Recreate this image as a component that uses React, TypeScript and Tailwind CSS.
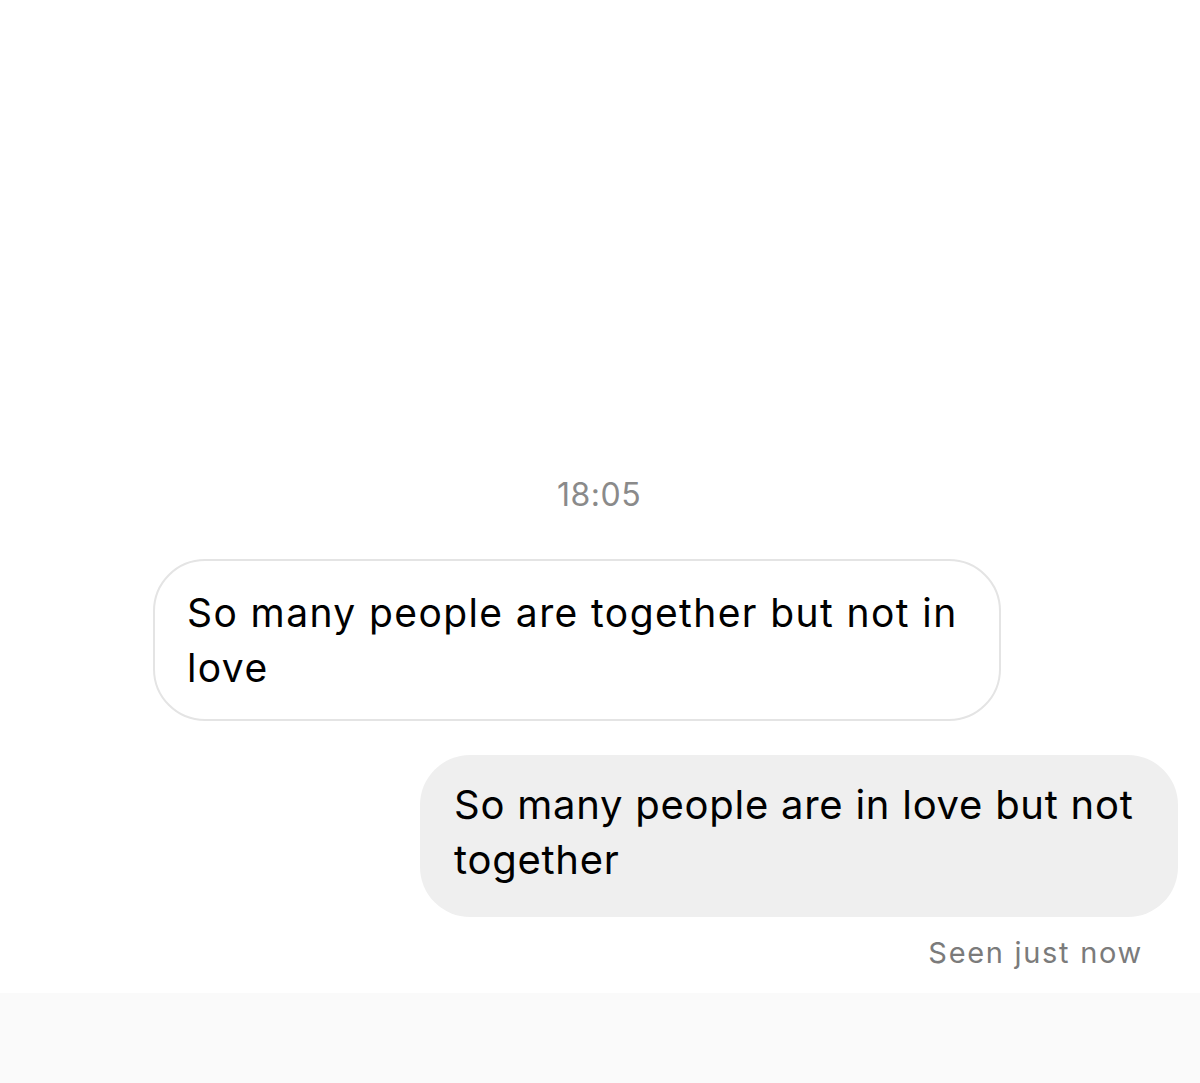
export default function App() {
  return (
    <div
      className="w-[1200px] h-[1083px] bg-white flex flex-col text-black overflow-hidden"
      style={{ fontFamily: 'Inter, "Liberation Sans", Arial, sans-serif' }}
    >
      <div className="flex-1 flex flex-col pt-[477px]">
        {/* timestamp */}
        <div className="text-center text-[32px] leading-[36px] text-[#8a8a8a] tracking-[0.5px] pr-[2px]">18:05</div>

        {/* received */}
        <div className="flex mt-[46px] pl-[153px]">
          <div className="w-[848px] h-[162px] rounded-[52px] border-2 border-[#e4e4e4] bg-white pl-[32px] pr-[26px] pt-[24px] text-[39px] leading-[55px] tracking-[1.4px]">
            So many people are together but not in love
          </div>
        </div>

        {/* sent */}
        <div className="flex justify-end mt-[34px] pr-[22px]">
          <div className="w-[758px] h-[162px] rounded-[50px] bg-[#efefef] pl-[34px] pr-[30px] pt-[22px] text-[40px] leading-[55px] tracking-[0.75px]">
            So many people are in love but not together
          </div>
        </div>

        <div className="flex justify-end pr-[57px] mt-[18px]">
          <span className="text-[29px] leading-[36px] text-[#7b7b7b] tracking-[1.7px]">Seen just now</span>
        </div>
      </div>
      <div className="h-[90px] bg-[#fafafa]" />
    </div>
  );
}
